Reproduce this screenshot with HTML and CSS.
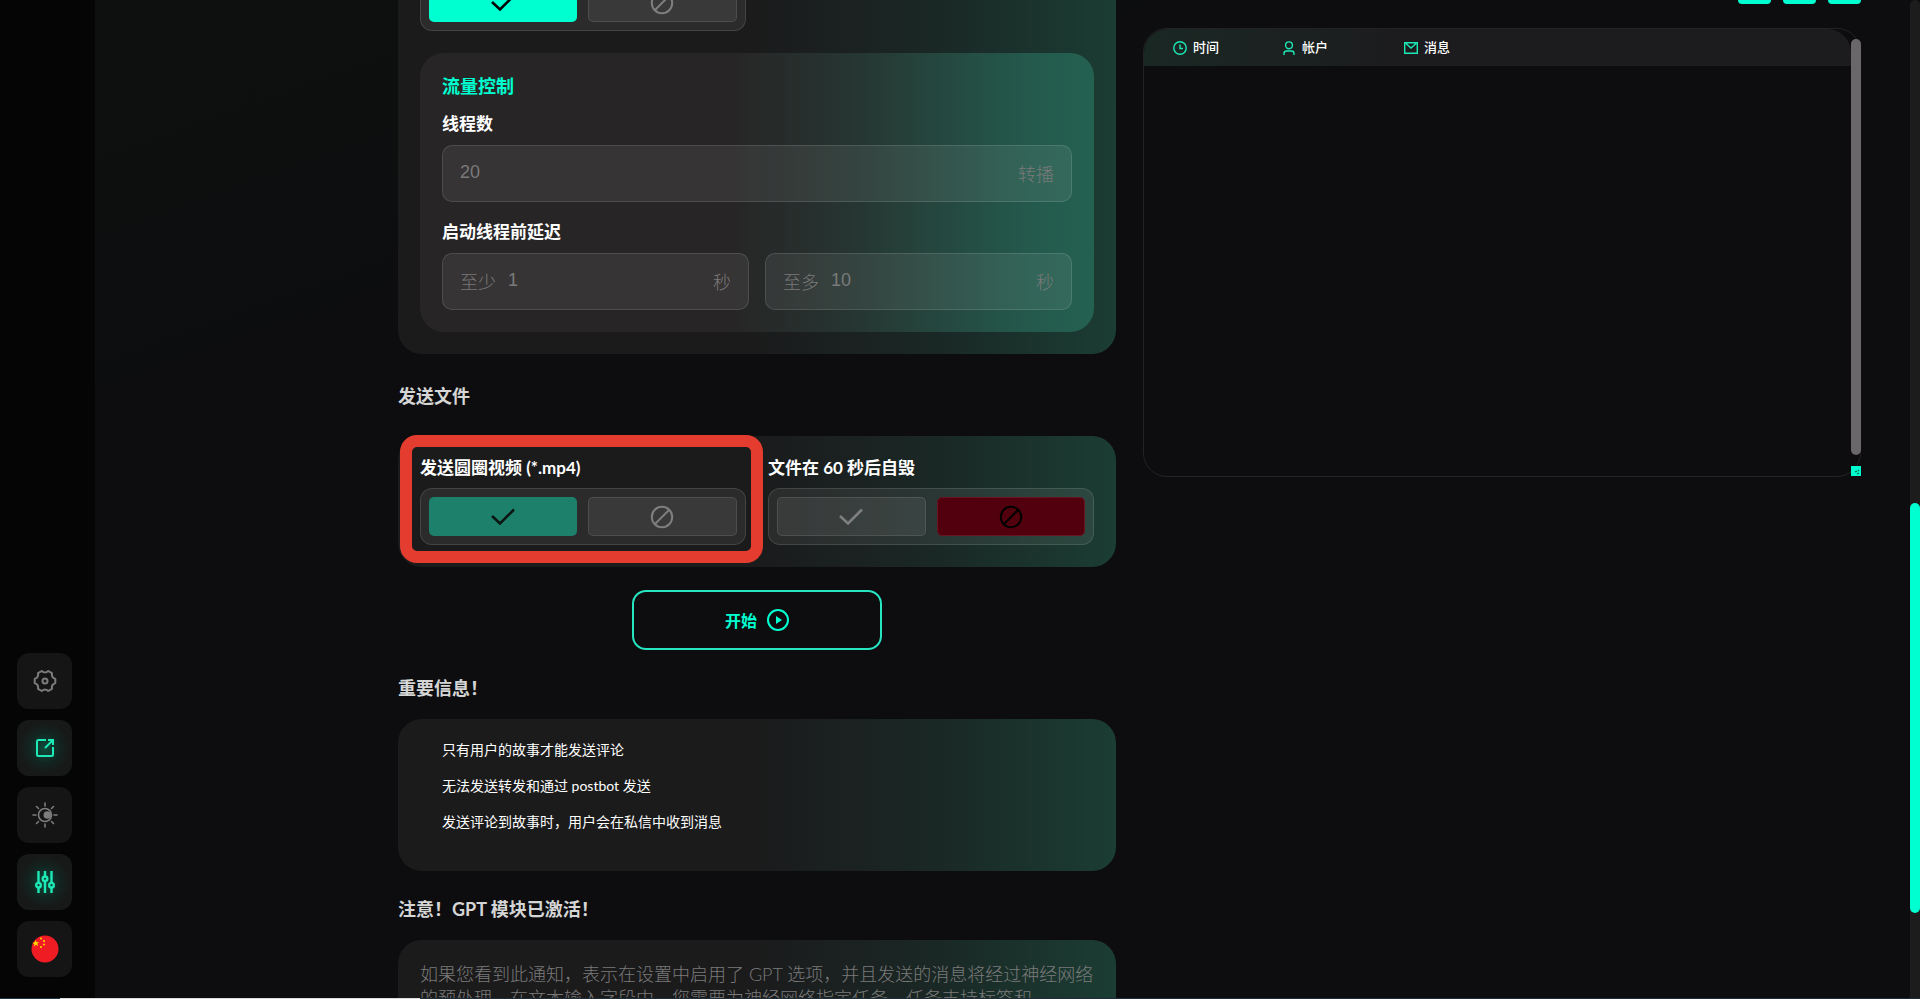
FILE: index.html
```html
<!DOCTYPE html>
<html lang="zh-CN">
<head>
    <meta charset="UTF-8">
    <meta name="viewport" content="width=device-width, initial-scale=1.0">
    <title>发送评论</title>
    <link rel="stylesheet" href="styles.css">
</head>
<body>
    <!-- 图标 -->
    <svg class="sprite" aria-hidden="true">
        <symbol id="check" viewBox="0 0 24 24"><path d="M1 11l8 7.500L23 4.500" fill="none" stroke="currentColor" stroke-width="2.600"/></symbol>
        <symbol id="ban" viewBox="0 0 24 24"><circle cx="12" cy="12" r="10.200" fill="none" stroke="currentColor" stroke-width="2"/><path d="M5 19L19 5" stroke="currentColor" stroke-width="2"/></symbol>
    </svg>
    <div class="page">
        <nav class="sidebar">
            <button class="side-button" aria-label="设置">
                <svg width="24" height="24" viewBox="0 0 24 24" fill="none" stroke="currentColor" stroke-width="2" stroke-linejoin="round"><path d="M22.300 9.900V14.100Q18.100 15.500 19 19.800L15.200 22Q12 19 8.800 22L5 19.800Q5.900 15.500 1.700 14.100V9.900Q5.900 8.500 5 4.200L8.800 2Q12 5 15.200 2L19 4.200Q18.100 8.500 22.300 9.900Z"/><circle cx="12" cy="12" r="2.500"/></svg>
            </button>
            <button class="side-button active" aria-label="打开">
                <svg width="22" height="22" viewBox="0 0 22 22" fill="none" stroke="currentColor" stroke-width="2"><path d="M12 3H4.500Q3 3 3 4.500v13Q3 19 4.500 19h13q1.500 0 1.500-1.500V10"/><path d="M11 11l8-8M14 3h5v5"/></svg>
            </button>
            <button class="side-button" aria-label="主题">
                <svg width="26" height="26" viewBox="0 0 26 26" fill="none" stroke="currentColor" stroke-width="1.600" stroke-linecap="round"><circle cx="13" cy="13" r="6.500"/><circle cx="15.300" cy="13" r="3.800" fill="currentColor" stroke="none"/><path d="M13 1v3M13 22v3M1 13h3M22 13h3M4.500 4.500l2 2M19.500 19.500l2 2M4.500 21.500l2-2M19.500 6.500l2-2"/></svg>
            </button>
            <button class="side-button active" aria-label="参数">
                <svg width="20" height="22" viewBox="0 0 20 22" fill="none" stroke="currentColor" stroke-width="2.400"><path d="M3.500 0v11.500M3.500 17v5M10 0v5M10 10.500V22M16.500 0v11.500M16.500 17v5"/><circle cx="3.500" cy="14.200" r="2.300"/><circle cx="10" cy="7.800" r="2.300"/><circle cx="16.500" cy="14.200" r="2.300"/></svg>
            </button>
            <button class="side-button" aria-label="语言">
                <svg width="28" height="28" viewBox="0 0 28 28"><circle cx="14" cy="14" r="13.500" fill="#f01c24"/><g fill="#ffe000"><path d="M4.500 5l1 2.200 2.400-.2-1.600 1.700.9 2.200-2.200-1.100L3 11.500l.4-2.300L1.500 7.800l2.200-.4z"/><circle cx="10" cy="3.500" r="1"/><circle cx="13" cy="6" r="1"/><circle cx="13" cy="9.500" r="1"/><circle cx="10" cy="12" r="1"/></g></svg>
            </button>
        </nav>

        <main class="content">
            <div class="settings">
                <section class="card card-first">
                    <div class="columns">
                        <div class="toggle">
                            <button class="toggle-button on" aria-label="是"><svg class="icon"><use href="#check"/></svg></button>
                            <button class="toggle-button" aria-label="否"><svg class="icon"><use href="#ban"/></svg></button>
                        </div>
                    </div>
                    <div class="flow">
                        <h3>流量控制</h3>
                        <label class="label" for="threads">线程数</label>
                        <div class="field">
                            <input id="threads" type="text" placeholder="20">
                            <span>转播</span>
                        </div>
                        <div class="label label-delay">启动线程前延迟</div>
                        <div class="field-row">
                            <div class="field">
                                <label for="delay-min">至少</label>
                                <input id="delay-min" type="text" placeholder="1">
                                <span>秒</span>
                            </div>
                            <div class="field">
                                <label for="delay-max">至多</label>
                                <input id="delay-max" type="text" placeholder="10">
                                <span>秒</span>
                            </div>
                        </div>
                    </div>
                </section>

                <h2 class="title-files">发送文件</h2>
                <section class="card card-files">
                    <div class="columns">
                        <div>
                            <div class="label">发送圆圈视频 (*.mp4)</div>
                            <div class="toggle">
                                <button class="toggle-button on-dim" aria-label="是"><svg class="icon"><use href="#check"/></svg></button>
                                <button class="toggle-button" aria-label="否"><svg class="icon"><use href="#ban"/></svg></button>
                            </div>
                        </div>
                        <div>
                            <div class="label">文件在 60 秒后自毁</div>
                            <div class="toggle">
                                <button class="toggle-button" aria-label="是"><svg class="icon"><use href="#check"/></svg></button>
                                <button class="toggle-button off" aria-label="否"><svg class="icon"><use href="#ban"/></svg></button>
                            </div>
                        </div>
                    </div>
                    <div class="highlight"></div>
                </section>

                <button class="start">开始
                    <svg width="22" height="22" viewBox="0 0 22 22"><circle cx="11" cy="11" r="10" fill="none" stroke="currentColor" stroke-width="2"/><path d="M9 7l6 4-6 4z" fill="currentColor"/></svg>
                </button>

                <h2>重要信息！</h2>
                <section class="card card-info">
                    <p>只有用户的故事才能发送评论</p>
                    <p>无法发送转发和通过 postbot 发送</p>
                    <p>发送评论到故事时，用户会在私信中收到消息</p>
                </section>

                <h2>注意！GPT 模块已激活！</h2>
                <section class="card card-gpt">
                    <p>如果您看到此通知，表示在设置中启用了 GPT 选项，并且发送的消息将经过神经网络的预处理。在文本输入字段中，您需要为神经网络指定任务。任务支持标签和</p>
                </section>
            </div>

            <aside class="side">
                <div class="tools">
                    <button class="tool" aria-label="下载"></button>
                    <button class="tool" aria-label="清除"></button>
                    <button class="tool" aria-label="展开"></button>
                </div>
                <div class="log">
                    <table>
                        <colgroup><col class="col-time"><col class="col-user"><col></colgroup>
                        <thead>
                            <tr>
                                <th><svg width="14" height="14" viewBox="0 0 14 14" fill="none" stroke="currentColor" stroke-width="1.400"><circle cx="7" cy="7" r="6.200"/><path d="M7 3.500V7.500h3"/></svg>时间</th>
                                <th><svg width="14" height="14" viewBox="0 0 14 14" fill="none" stroke="currentColor" stroke-width="1.400"><circle cx="7" cy="4.300" r="3.400"/><path d="M2 14v-1.500q0-2.500 2.500-2.500h5q2.500 0 2.500 2.500V14"/></svg>帐户</th>
                                <th><svg width="14" height="14" viewBox="0 0 14 14" fill="none" stroke="currentColor" stroke-width="1.400"><path d="M.7 1.700h12.600v10.600H.7zM2 2.500l5 4.500 5-4.500"/></svg>消息</th>
                            </tr>
                        </thead>
                    </table>
                    <div class="log-scroll"></div>
                    <svg class="log-resize" viewBox="0 0 10 10"><path d="M4 6l2-1M6 8l2-1M7 5l1-1" stroke="#064" stroke-width="1.200"/></svg>
                </div>
            </aside>
        </main>

        <div class="page-scroll"><div class="page-thumb"></div></div>
    </div>
    <div class="bottom-line"></div>
</body>
</html>
```

FILE: styles.css
```css
* {
    box-sizing: border-box;
}
body {
    margin: 0;
    background-color: #0d0d0f;
    color: #fff;
    font-family: Lato, "Noto Sans CJK SC", sans-serif;
    overflow: hidden;
}
h2, h3, p {
    margin: 0;
}
button {
    font-family: inherit;
    cursor: pointer;
}
.sprite {
    display: none;
}
.page {
    display: flex;
    height: 100vh;
    overflow: hidden;
}

/* 侧边栏 */
.sidebar {
    flex: 0 0 95px;
    display: flex;
    flex-direction: column;
    justify-content: flex-end;
    gap: 11px;
    padding: 0 0 22px 17px;
    background-color: #050505;
}
.side-button {
    display: flex;
    align-items: center;
    justify-content: center;
    width: 55px;
    height: 56px;
    padding: 0;
    border: none;
    border-radius: 12px;
    background-color: #151515;
    color: #7c7c7c;
}
.side-button.active {
    background: radial-gradient(circle, #0d4a3c 0%, #132420 40%, #171918 65%);
    color: #1de9b6;
}

/* 主要内容 */
.content {
    flex: 1;
    display: grid;
    grid-template-columns: 718px 1fr;
    gap: 27px;
    align-items: start;
    padding: 0 49px 0 303px;
    background: linear-gradient(160deg, #0e100f, #0d0d0f 30%);
}
.settings {
    display: flex;
    flex-direction: column;
}
.card {
    position: relative;
    padding: 22px;
    border-radius: 24px;
    background: linear-gradient(90deg, #1b1b1c 50%, #1a2825 75%, #1b3d33);
}
.card-first {
    margin-top: -48px;
}
.columns {
    display: grid;
    grid-template-columns: repeat(2, minmax(0, 1fr));
    gap: 22px;
}
.toggle {
    display: flex;
    gap: 11px;
    height: 57px;
    padding: 8px;
    border: 1px solid rgba(255, 255, 255, 0.12);
    border-radius: 12px;
    background-color: rgba(255, 255, 255, 0.07);
}
.toggle-button {
    flex: 1;
    display: flex;
    align-items: center;
    justify-content: center;
    padding: 0;
    border: 1px solid rgba(255, 255, 255, 0.1);
    border-radius: 5px;
    background-color: rgba(255, 255, 255, 0.07);
    color: #7f7f80;
}
.toggle-button.on {
    border: none;
    background-color: #00ffd0;
    color: #000;
}
.toggle-button.on-dim {
    border: none;
    background-color: #1c806b;
    color: #0b1512;
}
.toggle-button.off {
    border-color: #6a1420;
    background-color: #52000d;
    color: #000;
}
.icon {
    width: 24px;
    height: 24px;
}
.flow {
    margin-top: 22px;
    padding: 22px;
    border-radius: 24px;
    background: linear-gradient(90deg, #272526 46%, #263632 65%, #24594c 90%, #246151);
}
.flow h3 {
    color: #00ffd0;
    font-size: 18px;
    line-height: 22px;
    margin-bottom: 15px;
}
.label {
    display: block;
    font-size: 17px;
    font-weight: 700;
    line-height: 24px;
    margin-bottom: 8px;
}
.flow .label {
    margin-bottom: 9px;
}
.flow .label-delay {
    margin-top: 18px;
}
.field {
    display: flex;
    align-items: center;
    gap: 12px;
    height: 57px;
    padding: 0 17px 2px;
    border: 1px solid rgba(255, 255, 255, 0.12);
    border-radius: 10px;
    background-color: rgba(255, 255, 255, 0.07);
    color: #7a7a7a;
    font-size: 18px;
    font-weight: 300;
}
.field input {
    flex: 1;
    min-width: 0;
    padding: 0;
    border: none;
    outline: none;
    background: none;
    color: #fff;
    font-family: "Liberation Sans", "Noto Sans CJK SC", sans-serif;
    font-size: 18px;
}
.field input::placeholder {
    color: #7a7a7a;
}
.field-row {
    display: grid;
    grid-template-columns: repeat(2, minmax(0, 1fr));
    gap: 16px;
}
h2 {
    color: #d5d5d5;
    font-size: 18px;
    font-weight: 700;
    line-height: 24px;
    margin: 26px 0 19px;
}
.title-files {
    margin: 30px 0 28px;
}
.card-files {
    padding: 20px 22px 22px;
}
.highlight {
    position: absolute;
    top: -1px;
    left: 2px;
    width: 363px;
    height: 128px;
    border: 12px solid #e43d30;
    border-radius: 17px;
}
.start {
    display: flex;
    align-items: center;
    justify-content: center;
    gap: 10px;
    align-self: center;
    width: 250px;
    height: 60px;
    margin-top: 23px;
    border: 2px solid #26e6c2;
    border-radius: 14px;
    background: none;
    color: #00ffd0;
    font-size: 16px;
    font-weight: 700;
}
.card-info {
    padding: 13px 44px 31px;
}
.card-info p {
    font-size: 14px;
    line-height: 36px;
}
.card-gpt {
    padding-bottom: 60px;
}
.card-gpt p {
    color: #7a7a7a;
    font-size: 18px;
    font-weight: 300;
    line-height: 24px;
}

/* 日志 */
.tools {
    display: flex;
    justify-content: flex-end;
    gap: 12px;
    height: 4px;
}
.tool {
    width: 33px;
    padding: 0;
    border: none;
    border-radius: 0 0 5px 5px;
    background-color: #00ffd0;
}
.log {
    position: relative;
    height: 449px;
    margin-top: 24px;
    border: 1px solid #232325;
    border-radius: 24px;
}
.log table {
    width: calc(100% - 9px);
    border-collapse: collapse;
    table-layout: fixed;
    border-radius: 24px 24px 0 0;
    background: linear-gradient(90deg, #1a2824, #1c1c1e 35%);
}
.col-time {
    width: 138px;
}
.col-user {
    width: 122px;
}
.log th {
    height: 37px;
    padding: 0 0 3px;
    text-align: left;
    font-size: 13px;
    font-weight: 500;
}
.log th:first-child {
    padding-left: 29px;
}
.log th svg {
    margin-right: 6px;
    vertical-align: middle;
    color: #1de9b6;
}
.log-scroll {
    position: absolute;
    top: 10px;
    right: -1px;
    bottom: 21px;
    width: 10px;
    border-radius: 5px;
    background-color: #6a676b;
}
.log-resize {
    position: absolute;
    right: -1px;
    bottom: 0;
    width: 10px;
    height: 10px;
    background-color: #00ffd0;
}

/* 页面滚动条 */
.page-scroll {
    flex: 0 0 10px;
    border-radius: 5px 5px 0 0;
    background-color: #1c1c1c;
    padding-top: 503px;
}
.page-thumb {
    height: 410px;
    border-radius: 5px;
    background-color: #00ffd0;
}
.bottom-line {
    position: fixed;
    left: 0;
    right: 0;
    bottom: 0;
    height: 1px;
    background: linear-gradient(90deg, #1f3440 60px, #dcdcdc 60px, #dcdcdc 420px, #1f2c36 420px);
}
```
